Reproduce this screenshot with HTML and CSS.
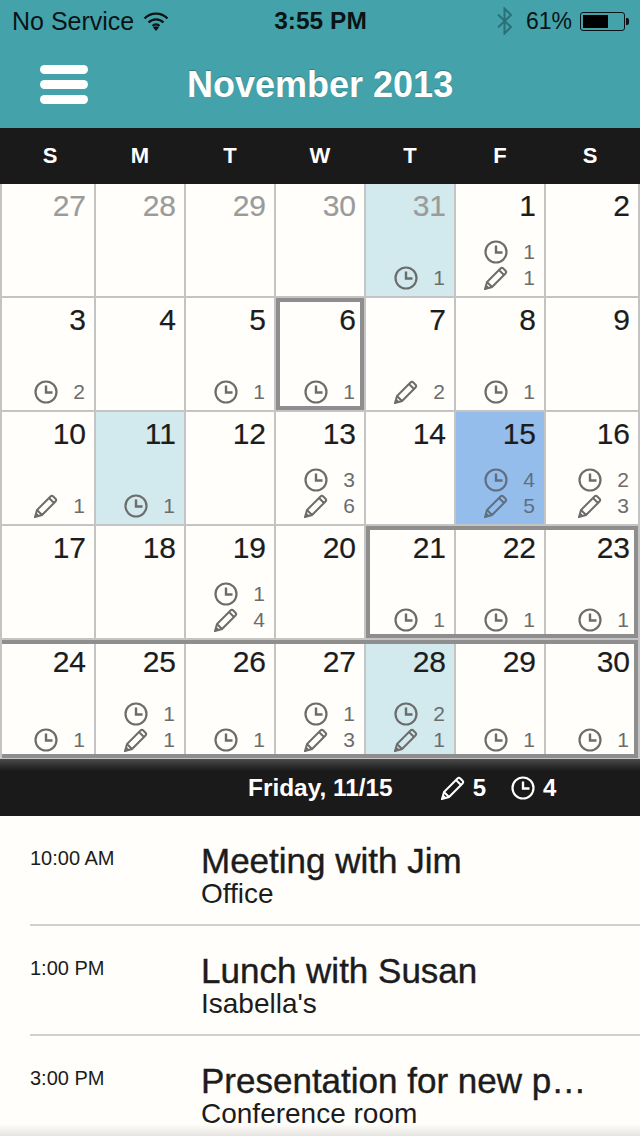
FILE: index.html
```html
<!DOCTYPE html>
<html lang="en">
<head>
  <meta charset="UTF-8">
  <meta name="viewport" content="width=device-width, initial-scale=1.0">
  <title>November 2013</title>
  <link rel="stylesheet" href="styles.css">
</head>
<body>
  <svg class="defs" width="0" height="0">
    <symbol id="clock" viewBox="0 0 24 24">
      <circle cx="12" cy="12" r="10.500" fill="none" stroke="currentColor" stroke-width="2.200"/>
      <path d="M12 5.500v7h6.500" fill="none" stroke="currentColor" stroke-width="2.400"/>
    </symbol>
    <symbol id="pencil" viewBox="0 0 24 24">
      <path d="M1 23l2-7L16.500 2.500a2 2 0 0 1 2.800 0l2.200 2.200a2 2 0 0 1 0 2.800L8 21z M3 16l5 5 M15 4l5 5" fill="none" stroke="currentColor" stroke-width="2"/>
      <path d="M1 23l1.200-4.500 3.300 3.300z" fill="currentColor"/>
    </symbol>
  </svg>

  <div id="app">
    <header class="top">
      <div class="status">
        <div class="status-left">
          <span>No Service</span>
          <svg class="wifi" width="26" height="20" viewBox="0 0 26 20">
            <path d="M1.500 7.500a16 16 0 0 1 23 0M5.500 11.500a10.500 10.500 0 0 1 15 0M9.500 15a5 5 0 0 1 7 0" fill="none" stroke="#0a1416" stroke-width="2.400"/>
            <path d="M13 20l-3-3.500a4.500 4.500 0 0 1 6 0z" fill="#0a1416"/>
          </svg>
        </div>
        <div class="status-time">3:55 PM</div>
        <div class="status-right">
          <svg class="bt" width="16" height="28" viewBox="0 0 16 28">
            <path d="M1 7.500l13 12.500-6.500 6.500V1.500L14 8 1 20.500" fill="none" stroke="#2b7078" stroke-width="2"/>
          </svg>
          <span class="pct">61%</span>
          <div class="battery"><div class="battery-fill"></div></div>
          <div class="battery-tip"></div>
        </div>
      </div>
      <div class="titlebar">
        <div class="menu"><span></span><span></span><span></span></div>
        <h1>November 2013</h1>
      </div>
    </header>

    <div class="weekdays">
      <span>S</span><span>M</span><span>T</span><span>W</span><span>T</span><span>F</span><span>S</span>
    </div>

    <div class="calendar">
      <div class="cell old"><div class="num">27</div></div>
      <div class="cell old"><div class="num">28</div></div>
      <div class="cell old"><div class="num">29</div></div>
      <div class="cell old"><div class="num">30</div></div>
      <div class="cell old has"><div class="num">31</div><div class="stats">
        <div class="stat"><svg><use href="#clock"/></svg><span>1</span></div>
      </div></div>
      <div class="cell"><div class="num">1</div><div class="stats">
        <div class="stat"><svg><use href="#clock"/></svg><span>1</span></div>
        <div class="stat"><svg><use href="#pencil"/></svg><span>1</span></div>
      </div></div>
      <div class="cell"><div class="num">2</div></div>

      <div class="cell"><div class="num">3</div><div class="stats">
        <div class="stat"><svg><use href="#clock"/></svg><span>2</span></div>
      </div></div>
      <div class="cell"><div class="num">4</div></div>
      <div class="cell"><div class="num">5</div><div class="stats">
        <div class="stat"><svg><use href="#clock"/></svg><span>1</span></div>
      </div></div>
      <div class="cell"><div class="num">6</div><div class="stats">
        <div class="stat"><svg><use href="#clock"/></svg><span>1</span></div>
      </div></div>
      <div class="cell"><div class="num">7</div><div class="stats">
        <div class="stat"><svg><use href="#pencil"/></svg><span>2</span></div>
      </div></div>
      <div class="cell"><div class="num">8</div><div class="stats">
        <div class="stat"><svg><use href="#clock"/></svg><span>1</span></div>
      </div></div>
      <div class="cell"><div class="num">9</div></div>

      <div class="cell"><div class="num">10</div><div class="stats">
        <div class="stat"><svg><use href="#pencil"/></svg><span>1</span></div>
      </div></div>
      <div class="cell has"><div class="num">11</div><div class="stats">
        <div class="stat"><svg><use href="#clock"/></svg><span>1</span></div>
      </div></div>
      <div class="cell"><div class="num">12</div></div>
      <div class="cell"><div class="num">13</div><div class="stats">
        <div class="stat"><svg><use href="#clock"/></svg><span>3</span></div>
        <div class="stat"><svg><use href="#pencil"/></svg><span>6</span></div>
      </div></div>
      <div class="cell"><div class="num">14</div></div>
      <div class="cell selected"><div class="num">15</div><div class="stats">
        <div class="stat"><svg><use href="#clock"/></svg><span>4</span></div>
        <div class="stat"><svg><use href="#pencil"/></svg><span>5</span></div>
      </div></div>
      <div class="cell"><div class="num">16</div><div class="stats">
        <div class="stat"><svg><use href="#clock"/></svg><span>2</span></div>
        <div class="stat"><svg><use href="#pencil"/></svg><span>3</span></div>
      </div></div>

      <div class="cell"><div class="num">17</div></div>
      <div class="cell"><div class="num">18</div></div>
      <div class="cell"><div class="num">19</div><div class="stats">
        <div class="stat"><svg><use href="#clock"/></svg><span>1</span></div>
        <div class="stat"><svg><use href="#pencil"/></svg><span>4</span></div>
      </div></div>
      <div class="cell"><div class="num">20</div></div>
      <div class="cell"><div class="num">21</div><div class="stats">
        <div class="stat"><svg><use href="#clock"/></svg><span>1</span></div>
      </div></div>
      <div class="cell"><div class="num">22</div><div class="stats">
        <div class="stat"><svg><use href="#clock"/></svg><span>1</span></div>
      </div></div>
      <div class="cell"><div class="num">23</div><div class="stats">
        <div class="stat"><svg><use href="#clock"/></svg><span>1</span></div>
      </div></div>

      <div class="cell"><div class="num">24</div><div class="stats">
        <div class="stat"><svg><use href="#clock"/></svg><span>1</span></div>
      </div></div>
      <div class="cell"><div class="num">25</div><div class="stats">
        <div class="stat"><svg><use href="#clock"/></svg><span>1</span></div>
        <div class="stat"><svg><use href="#pencil"/></svg><span>1</span></div>
      </div></div>
      <div class="cell"><div class="num">26</div><div class="stats">
        <div class="stat"><svg><use href="#clock"/></svg><span>1</span></div>
      </div></div>
      <div class="cell"><div class="num">27</div><div class="stats">
        <div class="stat"><svg><use href="#clock"/></svg><span>1</span></div>
        <div class="stat"><svg><use href="#pencil"/></svg><span>3</span></div>
      </div></div>
      <div class="cell has"><div class="num">28</div><div class="stats">
        <div class="stat"><svg><use href="#clock"/></svg><span>2</span></div>
        <div class="stat"><svg><use href="#pencil"/></svg><span>1</span></div>
      </div></div>
      <div class="cell"><div class="num">29</div><div class="stats">
        <div class="stat"><svg><use href="#clock"/></svg><span>1</span></div>
      </div></div>
      <div class="cell"><div class="num">30</div><div class="stats">
        <div class="stat"><svg><use href="#clock"/></svg><span>1</span></div>
      </div></div>

      <div class="range range-day"></div>
      <div class="range range-week"></div>
      <div class="range range-last"></div>
    </div>

    <div class="daybar">
      <span class="day-label">Friday, 11/15</span>
      <span class="day-stat"><svg><use href="#pencil"/></svg>5</span>
      <span class="day-stat"><svg><use href="#clock"/></svg>4</span>
    </div>

    <div class="agenda">
      <div class="event">
        <div class="event-time">10:00 AM</div>
        <div class="event-info">
          <div class="event-title">Meeting with Jim</div>
          <div class="event-place">Office</div>
        </div>
      </div>
      <div class="event">
        <div class="event-time">1:00 PM</div>
        <div class="event-info">
          <div class="event-title">Lunch with Susan</div>
          <div class="event-place">Isabella's</div>
        </div>
      </div>
      <div class="event">
        <div class="event-time">3:00 PM</div>
        <div class="event-info">
          <div class="event-title">Presentation for new p…</div>
          <div class="event-place">Conference room</div>
        </div>
      </div>
    </div>
    <div class="bottom-fade"></div>
  </div>
</body>
</html>
```

FILE: styles.css
```css
* {
  box-sizing: border-box;
}
body {
  margin: 0;
  background: #fffefa;
  font-family: "Liberation Sans", Arial, sans-serif;
  color: #1c1c1c;
}
.defs {
  position: absolute;
}
#app {
  position: relative;
  width: 640px;
  height: 1136px;
  overflow: hidden;
}

/* top bar */
.top {
  height: 128px;
  background: #44a3aa;
}
.status {
  display: flex;
  justify-content: space-between;
  align-items: center;
  height: 40px;
  padding: 2px 11px 0 12px;
  font-size: 25px;
  color: #0a1416;
}
.status-left {
  display: flex;
  align-items: center;
  gap: 9px;
  width: 220px;
}
.status-time {
  font-size: 24.500px;
  font-weight: bold;
}
.status-right {
  display: flex;
  align-items: center;
  justify-content: flex-end;
  width: 220px;
}
.bt {
  margin-right: 13px;
}
.pct {
  margin-right: 8px;
  font-size: 23px;
}
.battery {
  width: 45px;
  height: 19px;
  padding: 2px;
  border: 1px solid #0a1416;
  border-radius: 3px;
}
.battery-fill {
  width: 25px;
  height: 100%;
  background: #000;
}
.battery-tip {
  width: 3px;
  height: 7px;
  margin-left: 1px;
  background: #0a1416;
  border-radius: 0 2px 2px 0;
}
.titlebar {
  display: flex;
  align-items: center;
  height: 88px;
  padding-left: 40px;
}
.menu {
  display: flex;
  flex-direction: column;
  gap: 6px;
  width: 48px;
}
.menu span {
  height: 9px;
  background: #fff;
  border-radius: 5px;
}
.titlebar h1 {
  margin: 2px 0 0 99px;
  font-size: 36px;
  font-weight: bold;
  color: #fff;
  text-shadow: 0 -1px 1px rgba(0, 0, 0, 0.25);
}

/* weekday strip */
.weekdays {
  display: grid;
  grid-template-columns: repeat(7, 90px);
  align-items: center;
  height: 56px;
  padding-left: 5px;
  background: #1a1a1a;
  color: #fff;
  font-size: 22px;
  font-weight: bold;
  text-align: center;
}

/* month grid */
.calendar {
  position: relative;
  display: grid;
  grid-template-columns: 92px repeat(5, 88px) 92px;
  grid-template-rows: repeat(4, 112px) 118px;
  gap: 2px;
  height: 575px;
  padding: 0 2px;
  background: #c4c4c4;
  overflow: hidden;
}
.cell {
  display: flex;
  flex-direction: column;
  justify-content: space-between;
  padding: 5px 8px 5px 0;
  background: #fffefa;
}
.num {
  font-size: 30px;
  line-height: 34px;
  text-align: right;
  -webkit-text-stroke: 0.2px currentColor;
}
.old .num {
  color: #9b9b9b;
}
.has {
  background: #d2e9ed;
}
.selected {
  background: #94bdec;
}
.stats {
  display: flex;
  flex-direction: column;
  color: #6c6c6c;
}
.selected .stats {
  color: #5f6f80;
}
.stat {
  display: flex;
  justify-content: flex-end;
  align-items: center;
  height: 26px;
  font-size: 21px;
}
.stat svg {
  width: 24px;
  height: 24px;
}
.stat span {
  width: 28px;
  padding-right: 1px;
  text-align: right;
}

/* outlines lie over the cells */
.range {
  position: absolute;
  border: 4px solid #8e8e8e;
}
.range-day {
  left: 276px;
  top: 114px;
  width: 88px;
  height: 112px;
}
.range-week {
  left: 366px;
  top: 342px;
  width: 272px;
  height: 112px;
}
.range-last {
  left: 2px;
  top: 456px;
  width: 636px;
  height: 118px;
  border-left: 0;
}

/* selected day strip */
.daybar {
  display: flex;
  align-items: center;
  height: 57px;
  padding-left: 248px;
  background: linear-gradient(#4a4a4a 0, #1a1a1a 12px);
  color: #fff;
  font-size: 24px;
  font-weight: bold;
}
.day-label {
  margin-right: 48px;
  font-size: 24.400px;
}
.day-stat {
  display: flex;
  align-items: center;
  gap: 8px;
  margin-right: 25px;
}
.day-stat svg {
  width: 24px;
  height: 24px;
}

/* agenda */
.event {
  display: flex;
  height: 110px;
  margin-left: 30px;
  padding-top: 26px;
  border-bottom: 2px solid #d0d0d0;
}
.event-time {
  width: 171px;
  padding-top: 5px;
  font-size: 20px;
  line-height: 22px;
}
.event-title {
  font-size: 35px;
  line-height: 38px;
  -webkit-text-stroke: 0.4px #1c1c1c;
}
.event-place {
  font-size: 28px;
  line-height: 27px;
}
.bottom-fade {
  position: absolute;
  left: 0;
  right: 0;
  bottom: 0;
  height: 12px;
  background: linear-gradient(rgba(0, 0, 0, 0), rgba(0, 0, 0, 0.1));
}
```
